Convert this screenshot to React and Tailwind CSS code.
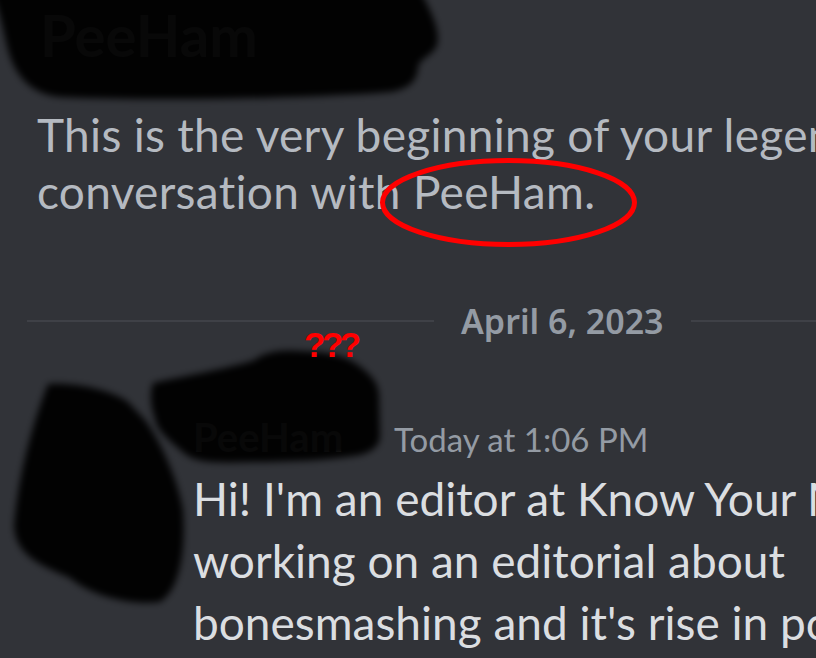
export default function App() {
  return (
    <div className="relative h-[658px] w-[816px] overflow-hidden bg-[#313338] font-['Lato',sans-serif] [font-variant-ligatures:none]">
      {/* DM header name (scribbled over) */}
      <div className="h-[106px] whitespace-nowrap pl-[40px] text-[58px] font-bold leading-[70px] text-[#f2f3f5]">
        PeeHam
      </div>

      <p className="whitespace-nowrap pl-[37px] text-[46px] leading-[57px] tracking-[0.3px] text-[#b5bac1]">
        This is the very beginning of your legendary
        <br />
        conversation with PeeHam.
      </p>

      {/* date divider */}
      <div className="mt-[84px] flex items-center pl-[27px]">
        <div className="h-[2px] w-[407px] bg-[#3f4147]" />
        <span className="whitespace-nowrap px-[27px] font-['Noto_Sans',sans-serif] text-[34px] font-semibold leading-[34px] text-[#949ba4]">
          April 6, 2023
        </span>
        <div className="h-[2px] flex-1 bg-[#3f4147]" />
      </div>

      {/* message */}
      <div className="mt-[79px] flex pl-[35px]">
        <div className="w-[158px] shrink-0 pt-[14px]">
          <div className="h-[122px] w-[122px] rounded-full bg-[#3a3630]" />
        </div>
        <div className="min-w-0">
          <div className="flex items-baseline whitespace-nowrap">
            <span className="w-[201px] text-[40px] font-bold leading-[40px] text-[#f2f3f5]">PeeHam</span>
            <span className="text-[33px] leading-[40px] text-[#949ba4]">Today at 1:06 PM</span>
          </div>
          <p className="mt-[9px] whitespace-nowrap text-[46px] leading-[62px] text-[#dbdee1]">
            Hi! I'm an editor at Know Your Meme and I'm
            <br />
            working on an editorial about
            <br />
            bonesmashing and it's rise in popularity
          </p>
        </div>
      </div>

      {/* redaction scribbles */}
      <svg className="pointer-events-none absolute left-0 top-0" width="816" height="658" viewBox="0 0 816 658">
        <defs>
          <filter id="soft" x="-10%" y="-10%" width="120%" height="120%">
            <feGaussianBlur stdDeviation="3.5" />
          </filter>
        </defs>
        <g filter="url(#soft)" fill="#000" fillOpacity="0.97">
          <path d="M-10 -10 L420 -10 C430 10 441 30 437 45 C433 56 419 58 418 68 C417 81 409 89 390 92 C300 99 150 101 60 97 C30 94 15 75 8 50 C3 30 0 10 -10 -10 Z" />
          <path d="M48 384 C80 382 115 392 128 402 L145 420 C160 440 178 480 183 510 C186 550 180 590 160 602 C130 606 90 595 70 578 C40 565 15 555 14 525 C18 480 30 430 48 384 Z" />
          <path d="M153 383 C190 375 230 368 255 360 C262 352 285 349 300 351 C325 352 345 354 362 368 C372 376 378 383 379 395 L380 438 C378 448 370 452 360 455 C330 460 290 462 250 462 C215 463 195 463 184 453 C170 441 156 430 155 418 C150 405 150 392 153 383 Z" />
        </g>
      </svg>

      {/* red annotations */}
      <svg className="pointer-events-none absolute left-0 top-0" width="816" height="658" viewBox="0 0 816 658">
        <ellipse cx="508.5" cy="202.5" rx="126" ry="42" fill="none" stroke="#ff0000" strokeWidth="5" />
      </svg>
      <span className="absolute left-[304px] top-[325px] font-['Liberation_Sans',sans-serif] text-[35px] font-bold leading-[40px] tracking-[-3.5px] text-[#ff0000]">
        ???
      </span>
    </div>
  );
}
